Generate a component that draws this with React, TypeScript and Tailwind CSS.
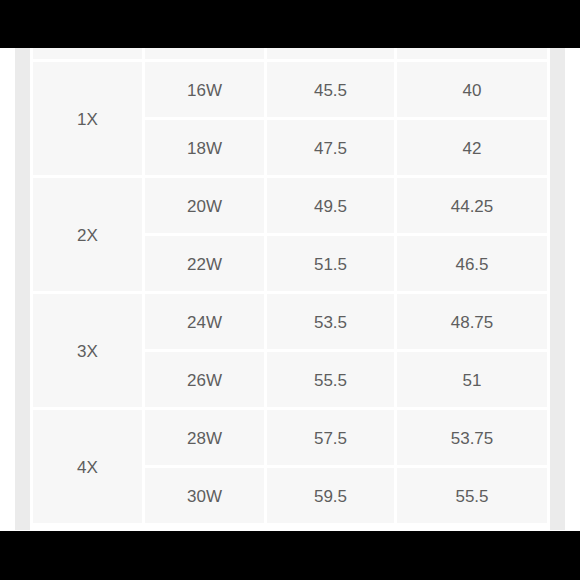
const groups = [
  { size: "1X", rows: [["16W", "45.5", "40"], ["18W", "47.5", "42"]] },
  { size: "2X", rows: [["20W", "49.5", "44.25"], ["22W", "51.5", "46.5"]] },
  { size: "3X", rows: [["24W", "53.5", "48.75"], ["26W", "55.5", "51"]] },
  { size: "4X", rows: [["28W", "57.5", "53.75"], ["30W", "59.5", "55.5"]] },
];

const cell = "bg-[#f7f7f7] flex items-center justify-center pt-[2px]";

export default function App() {
  return (
    <div
      className="w-[580px] h-[580px] bg-black overflow-hidden text-[17px] text-[#5e5e5e]"
      style={{ fontFamily: '"Liberation Sans", Arial, sans-serif' }}
    >
      <div className="h-[48px]" />
      <div className="h-[483px] bg-white px-[15px]">
        <div className="h-[482px] bg-[#ebebeb] px-[15px]">
          <div className="h-full bg-white pl-[3px] pr-[3px] pb-[7px]">
            <div className="grid grid-cols-[109px_119px_127px_150px] grid-rows-[11px_repeat(8,55px)] gap-[3px]">
              {/* header row, scrolled out of view */}
              <div className="bg-[#f7f7f7]" />
              <div className="bg-[#f7f7f7]" />
              <div className="bg-[#f7f7f7]" />
              <div className="bg-[#f7f7f7]" />

              {groups.map((g) => [
                <div key={g.size} className={`${cell} row-span-2`}>
                  {g.size}
                </div>,
                ...g.rows.flatMap((r, i) => [
                  <div key={`${g.size}-${i}-a`} className={`${cell} col-start-2`}>
                    {r[0]}
                  </div>,
                  <div key={`${g.size}-${i}-b`} className={cell}>
                    {r[1]}
                  </div>,
                  <div key={`${g.size}-${i}-c`} className={cell}>
                    {r[2]}
                  </div>,
                ]),
              ])}
            </div>
          </div>
        </div>
      </div>
    </div>
  );
}
